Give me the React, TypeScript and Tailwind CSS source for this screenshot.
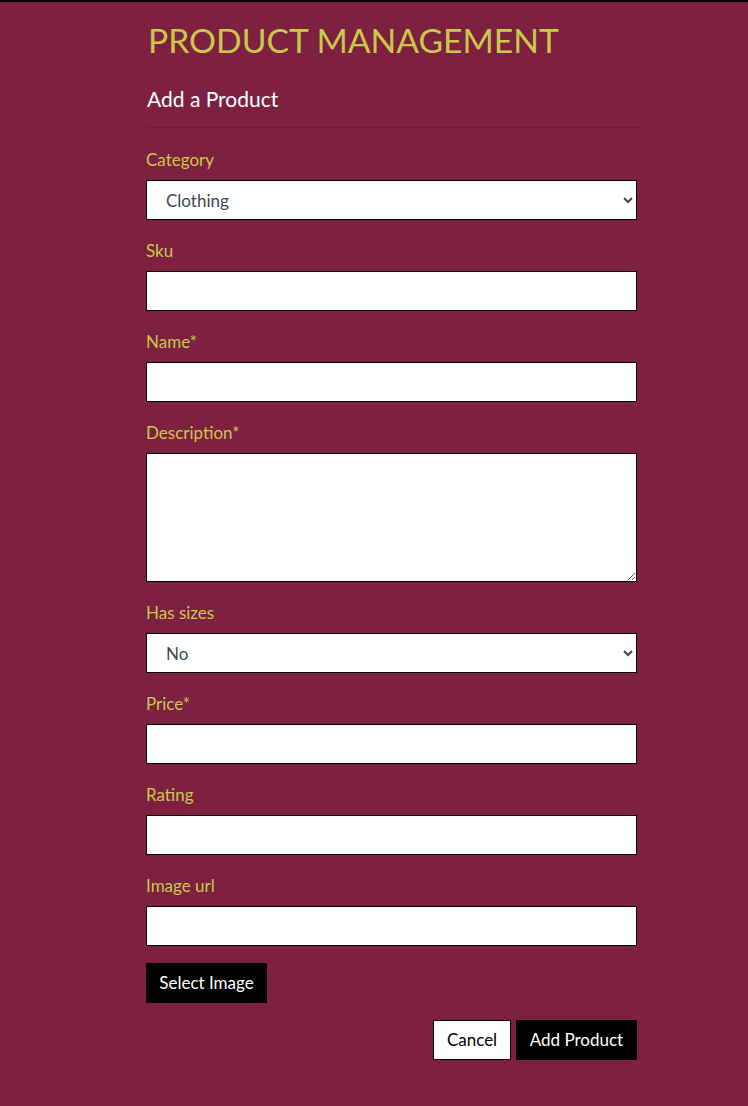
const labelCls = 'block h-6 leading-6 pt-px text-[17px] text-[#c9c84b]'
const boxCls = 'mt-[9px] block w-[491px] h-10 border border-black bg-white rounded-none text-[17px] text-[#3b4656] outline-none'

function Field({ label, children }: { label: string; children: React.ReactNode }) {
  return (
    <div className="mt-[18px] first:mt-0">
      <label className={labelCls}>{label}</label>
      {children}
    </div>
  )
}

export default function App() {
  return (
    <div
      className="min-h-[1106px] bg-[#7e2040] border-t-2 border-black"
      style={{ fontFamily: 'Lato, "Open Sans", sans-serif' }}
    >
      <div className="ml-[146px] w-[494px] pt-[18px] pb-10">
        <h1 className="pl-[2px] text-[33.7px] leading-10 text-[#c9c84b]">PRODUCT MANAGEMENT</h1>
        <h2 className="mt-[25px] pl-px text-[21px] leading-7 text-white">Add a Product</h2>
        <div className="mt-[14px] mb-[19px] h-px bg-[#6e1c38]" />

        <form onSubmit={(e) => e.preventDefault()}>
          <Field label="Category">
            <select className={`${boxCls} pl-[15px]`} defaultValue="Clothing">
              <option>Clothing</option>
              <option>Electronics</option>
              <option>Home</option>
            </select>
          </Field>
          <Field label="Sku">
            <input className={`${boxCls} px-3`} />
          </Field>
          <Field label="Name*">
            <input className={`${boxCls} px-3`} />
          </Field>
          <Field label="Description*">
            <textarea className={`${boxCls} h-[129px] px-3 py-2`} />
          </Field>
          <Field label="Has sizes">
            <select className={`${boxCls} pl-[15px]`} defaultValue="No">
              <option>No</option>
              <option>Yes</option>
            </select>
          </Field>
          <Field label="Price*">
            <input className={`${boxCls} px-3`} />
          </Field>
          <Field label="Rating">
            <input className={`${boxCls} px-3`} />
          </Field>
          <Field label="Image url">
            <input className={`${boxCls} px-3`} />
          </Field>

          <button
            type="button"
            className="mt-[17px] block h-10 w-[121px] bg-black text-[17px] text-white"
          >
            Select Image
          </button>

          <div className="mt-[17px] flex w-[491px] justify-end gap-[5px]">
            <button type="button" className="h-10 w-[78px] border border-black bg-white text-[17px] text-black">
              Cancel
            </button>
            <button type="submit" className="h-10 w-[121px] bg-black text-[17px] text-white">
              Add Product
            </button>
          </div>
        </form>
      </div>
    </div>
  )
}
